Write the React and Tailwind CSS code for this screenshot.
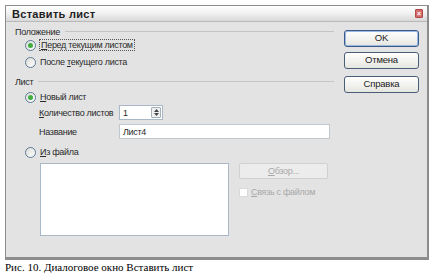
import React from "react";

function Radio({ checked }) {
  return (
    <div className="w-[11px] h-[11px] rounded-full border border-[#5a7a9a] bg-gradient-to-br from-[#dcdcd6] to-white flex items-center justify-center shrink-0">
      {checked && <div className="w-[5px] h-[5px] rounded-full bg-[#3fae3f]" />}
    </div>
  );
}

function Btn({ children, def }) {
  return (
    <div
      className={`h-[17px] w-[75px] rounded-[3px] border ${def ? "border-[#3c5a86] shadow-[inset_0_0_0_1px_#9bb8e6]" : "border-[#4a5e78]"} bg-gradient-to-b from-white to-[#e6e6e0] flex items-center justify-center text-[9.5px] tracking-[-0.2px] text-[#222]`}
    >
      {children}
    </div>
  );
}

function Section({ label }) {
  return (
    <div className="h-[12px] flex items-center">
      <span className="leading-[12px] text-[#2a2a2a]">{label}</span>
      <div className="flex-1 ml-[5px] h-[2px] border-t border-[#c4c4c4] border-b-white" />
    </div>
  );
}

export default function App() {
  return (
    <div
      className="w-[434px] h-[274px] bg-white overflow-hidden flex flex-col"
      style={{ fontFamily: '"Liberation Sans", Arial, sans-serif' }}
    >
      <div className="ml-[5px] mt-[5px] w-[424px] h-[255px] border border-[#8c8c8c] border-b-[3px] border-r-[2px] bg-[#e3e3e3] flex flex-col">
        {/* title bar */}
        <div className="h-[16px] shrink-0 bg-gradient-to-b from-white via-[#f0f0f0] to-[#d8d8d8] border-b border-[#b8b8b8] flex items-center pl-[6px] pr-[4px]">
          <span className="text-[11px] font-bold tracking-[0.3px] text-[#1e1e1e] leading-[14px]">
            Вставить лист
          </span>
          <div className="ml-auto w-[8px] h-[9px] rounded-[1px] bg-[#d46a6a] border border-[#b04848] flex items-center justify-center text-white text-[7px] leading-none font-bold">
            ×
          </div>
        </div>

        {/* body */}
        <div className="flex flex-1 pt-[4px] pl-[9px]">
          {/* left column */}
          <div className="w-[319px] flex flex-col text-[9px] tracking-[-0.3px] whitespace-nowrap text-[#2a2a2a] leading-[12px]">
            <Section label="Положение" />
            <div className="h-[12px] mt-[1px] pl-[10px] flex items-center">
              <Radio checked />
              <span className="ml-[3px] px-[1px] border border-dotted border-[#555] leading-[10px]">
                <u>П</u>еред текущим листом
              </span>
            </div>
            <div className="h-[12px] mt-[5px] pl-[10px] flex items-center">
              <Radio />
              <span className="ml-[4px]">
                После <u>т</u>екущего листа
              </span>
            </div>
            <div className="mt-[8px]">
              <Section label="Лист" />
            </div>
            <div className="h-[12px] mt-[3px] pl-[10px] flex items-center">
              <Radio checked />
              <span className="ml-[4px]">
                <u>Н</u>овый лист
              </span>
            </div>
            <div className="h-[15px] mt-[2px] pl-[24px] flex items-center">
              <span className="w-[80px]">
                <u>К</u>оличество листов
              </span>
              <div className="w-[44px] h-[15px] bg-white border border-[#a8b8c8] flex items-center">
                <span className="pl-[3px] flex-1">1</span>
                <div className="w-[10px] h-[11px] mr-[1px] border border-[#a8b0b8] rounded-[1px] bg-[#eef0f2] flex flex-col items-center justify-center gap-[1px]">
                  <svg width="5" height="3" viewBox="0 0 5 3"><path d="M0 3 L2.5 0 L5 3 Z" fill="#444" /></svg>
                  <svg width="5" height="3" viewBox="0 0 5 3"><path d="M0 0 L2.5 3 L5 0 Z" fill="#444" /></svg>
                </div>
              </div>
            </div>
            <div className="h-[15px] mt-[4px] pl-[24px] flex items-center">
              <span className="w-[80px]">Название</span>
              <div className="w-[211px] h-[15px] bg-white border border-[#c0c8d0] flex items-center pl-[3px]">
                Лист4
              </div>
            </div>
            <div className="h-[12px] mt-[7px] pl-[10px] flex items-center">
              <Radio />
              <span className="ml-[4px]">
                <u>И</u>з файла
              </span>
            </div>
            <div className="mt-[5px] pl-[25px] flex">
              <div className="w-[189px] h-[73px] bg-white border border-[#a8b8c8]" />
              <div className="ml-[10px] flex flex-col">
                <div className="w-[89px] h-[16px] rounded-[2px] border border-[#d0d0d0] bg-[#ececec] flex items-center justify-center text-[#a8a8a8]">
                  <span>
                    <u>О</u>бзор...
                  </span>
                </div>
                <div className="mt-[7px] flex items-center">
                  <div className="w-[9px] h-[9px] bg-white border border-[#dadada]" />
                  <span className="ml-[3px] text-[#a8a8a8]">
                    <u>С</u>вязь с файлом
                  </span>
                </div>
              </div>
            </div>
          </div>

          {/* right column */}
          <div className="ml-[10px] pt-[4px] flex flex-col">
            <Btn def>OK</Btn>
            <div className="mt-[5px]">
              <Btn>Отмена</Btn>
            </div>
            <div className="mt-[7px]">
              <Btn>Справка</Btn>
            </div>
          </div>
        </div>
      </div>
      <div
        className="pl-[5px] mt-[1px] text-[11px] leading-[13px] text-black"
        style={{ fontFamily: '"Liberation Serif", "Times New Roman", serif' }}
      >
        Рис. 10. Диалоговое окно Вставить лист
      </div>
    </div>
  );
}
